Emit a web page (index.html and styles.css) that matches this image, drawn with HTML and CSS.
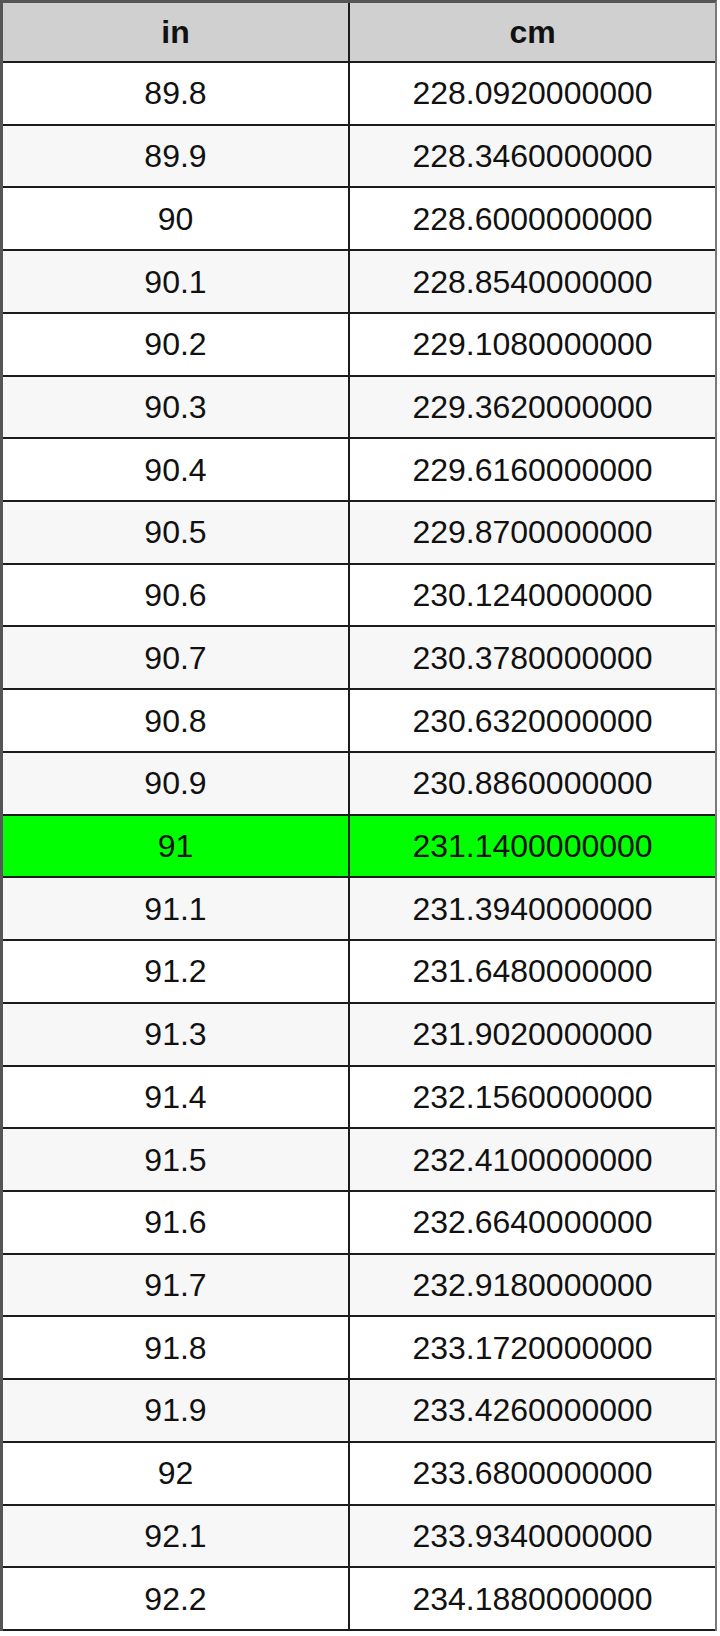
FILE: index.html
```html
<!DOCTYPE html>
<html>
<head>
<meta charset="utf-8">
<link rel="stylesheet" href="styles.css">
</head>
<body>
<div class="conv">
  <div class="cell head left">in</div><div class="cell head">cm</div>
  <div class="cell left">89.8</div><div class="cell">228.0920000000</div>
  <div class="cell left alt">89.9</div><div class="cell alt">228.3460000000</div>
  <div class="cell left">90</div><div class="cell">228.6000000000</div>
  <div class="cell left alt">90.1</div><div class="cell alt">228.8540000000</div>
  <div class="cell left">90.2</div><div class="cell">229.1080000000</div>
  <div class="cell left alt">90.3</div><div class="cell alt">229.3620000000</div>
  <div class="cell left">90.4</div><div class="cell">229.6160000000</div>
  <div class="cell left alt">90.5</div><div class="cell alt">229.8700000000</div>
  <div class="cell left">90.6</div><div class="cell">230.1240000000</div>
  <div class="cell left alt">90.7</div><div class="cell alt">230.3780000000</div>
  <div class="cell left">90.8</div><div class="cell">230.6320000000</div>
  <div class="cell left alt">90.9</div><div class="cell alt">230.8860000000</div>
  <div class="cell left hl">91</div><div class="cell hl">231.1400000000</div>
  <div class="cell left alt">91.1</div><div class="cell alt">231.3940000000</div>
  <div class="cell left">91.2</div><div class="cell">231.6480000000</div>
  <div class="cell left alt">91.3</div><div class="cell alt">231.9020000000</div>
  <div class="cell left">91.4</div><div class="cell">232.1560000000</div>
  <div class="cell left alt">91.5</div><div class="cell alt">232.4100000000</div>
  <div class="cell left">91.6</div><div class="cell">232.6640000000</div>
  <div class="cell left alt">91.7</div><div class="cell alt">232.9180000000</div>
  <div class="cell left">91.8</div><div class="cell">233.1720000000</div>
  <div class="cell left alt">91.9</div><div class="cell alt">233.4260000000</div>
  <div class="cell left">92</div><div class="cell">233.6800000000</div>
  <div class="cell left alt">92.1</div><div class="cell alt">233.9340000000</div>
  <div class="cell left">92.2</div><div class="cell">234.1880000000</div>
</div>
</body>
</html>
```
FILE: styles.css
```css
html, body {
  margin: 0;
  padding: 0;
  background: #ffffff;
}

.conv {
  display: grid;
  grid-template-columns: 347px 365px;
  grid-template-rows: 60px;
  grid-auto-rows: 62.72px;
  width: 717px;
  box-sizing: border-box;
  border-top: 3px solid #555555;
  border-left: 3px solid #555555;
  border-right: 2px solid #7a7a7a;
  font-family: "Liberation Sans", Arial, sans-serif;
  font-size: 32px;
  color: #111111;
}

.cell {
  display: flex;
  align-items: center;
  justify-content: center;
  box-sizing: border-box;
  border-bottom: 2px solid #1c1c1c;
  background: #ffffff;
  padding-top: 1px;
}

.left {
  border-right: 2px solid #1c1c1c;
}

.head {
  background: #d0d0d0;
  font-weight: bold;
}

.alt {
  background: #f7f7f7;
}

.hl {
  background: #00ff00;
}
```
